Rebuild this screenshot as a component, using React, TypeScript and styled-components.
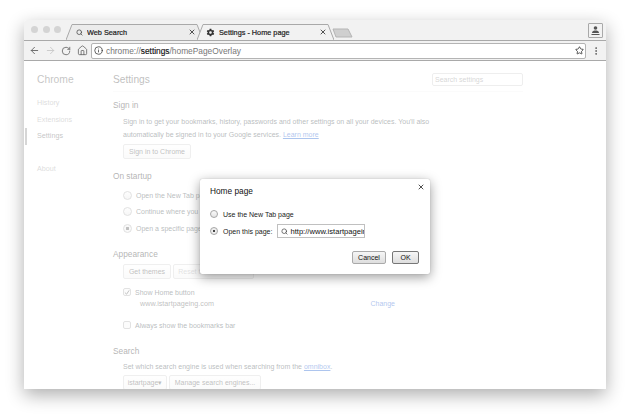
import React from 'react';
import styled, { createGlobalStyle } from 'styled-components';
import { ArrowLeft, ArrowRight, RotateCw, Home, Info, Star, X, Search, MoreVertical } from 'lucide-react';
import { IoMdSettings } from 'react-icons/io';

const GlobalStyle = createGlobalStyle`
  html, body {
    margin: 0;
    padding: 0;
    width: 630px;
    height: 418px;
    overflow: hidden;
    background: #fff;
    font-family: "Liberation Sans", Arial, sans-serif;
  }
`;

const Window = styled.div`
  position: relative;
  width: 582px;
  height: 369px;
  margin: 20px 24px 0;
  display: flex;
  flex-direction: column;
  background: #fff;
  border-radius: 3px 3px 0 0;
  box-shadow: 0 6px 18px rgba(0, 0, 0, 0.32);
`;

const TabStrip = styled.div`
  height: 21px;
  flex: none;
  display: flex;
  align-items: flex-end;
  background: #f2f2f2;
  border-bottom: 1px solid #a9a9a9;
  border-radius: 3px 3px 0 0;
  box-sizing: border-box;
  position: relative;
`;

const Lights = styled.div`
  display: flex;
  gap: 4.5px;
  align-self: flex-start;
  margin: 6px 0 0 7px;
  width: 35px;
`;

const Light = styled.span`
  width: 7px;
  height: 7px;
  border-radius: 50%;
  background: #d4d4d4;
`;

const Tab = styled.div<{ $active?: boolean }>`
  position: relative;
  width: 137px;
  height: 16px;
  margin-left: ${p => (p.$active ? '-6px' : '0')};
  padding: 0 7.5px 0 ${p => (p.$active ? '9px' : '10px')};
  box-sizing: border-box;
  display: flex;
  align-items: center;
  gap: 4px;
  font-size: 7.3px;
  color: #222;
  -webkit-text-stroke: 0.2px #222;
  z-index: ${p => (p.$active ? 2 : 1)};
`;

const TabShape = styled.svg`
  position: absolute;
  inset: 0;
  width: 100%;
  height: 100%;
  z-index: -1;
`;

const TabLabel = styled.span`
  flex: 1;
  white-space: nowrap;
  overflow: hidden;
`;

const NewTab = styled.svg`
  width: 21px;
  height: 10px;
  margin: 0 0 2px -2px;
`;

const ProfileButton = styled.div`
  position: absolute;
  top: 3px;
  right: 3px;
  width: 15px;
  height: 15px;
  box-sizing: border-box;
  border: 1px solid #a9a9a9;
  border-radius: 1px;
  display: flex;
  align-items: center;
  justify-content: center;
`;

const Toolbar = styled.div`
  height: 20px;
  flex: none;
  box-sizing: border-box;
  display: flex;
  align-items: center;
  gap: 4px;
  padding: 0 4px;
  background: #f2f2f2;
  border-bottom: 1px solid #a9a9a9;
`;

const NavIcon = styled.div<{ $off?: boolean }>`
  width: 12px;
  height: 12px;
  display: flex;
  align-items: center;
  justify-content: center;
  color: ${p => (p.$off ? '#c8c8c8' : '#666')};
`;

const Omnibox = styled.div`
  flex: 1;
  height: 16px;
  margin-left: -1px;
  box-sizing: border-box;
  display: flex;
  align-items: center;
  gap: 3px;
  padding: 0 1.5px 0 2px;
  background: #fff;
  border: 1px solid #b4b4b4;
  border-radius: 2px;
  font-size: 8.35px;
  color: #777;
`;

const Url = styled.span`
  flex: 1;
  white-space: nowrap;
  b {
    font-weight: 400;
    color: #111;
    -webkit-text-stroke: 0.15px #111;
  }
`;

const Page = styled.div`
  flex: 1;
  position: relative;
  display: flex;
  color: #303942;
  font-size: 7px;
  overflow: hidden;
`;

const Sidebar = styled.div`
  width: 89px;
  flex: none;
  padding-top: 12px;
  box-sizing: border-box;
`;

const SideTitle = styled.div`
  font-size: 10.3px;
  line-height: 13px;
  color: #555;
  margin: 0 0 9px 13px;
`;

const SideItem = styled.div<{ $active?: boolean; $gap?: number }>`
  height: 16.5px;
  line-height: 16.5px;
  margin: ${p => p.$gap || 0}px 0 0 1px;
  padding-left: 10px;
  font-size: 7.2px;
  border-left: 2px solid ${p => (p.$active ? '#888' : 'transparent')};
  color: ${p => (p.$active ? '#555' : '#999')};
`;

const Main = styled.div`
  flex: 1;
  padding-top: 12px;
`;

const Header = styled.div`
  width: 410px;
  height: 18px;
  display: flex;
  justify-content: space-between;
  align-items: flex-start;
  border-bottom: 1px solid #f2f2f2;
`;

const PageTitle = styled.div`
  font-size: 10.2px;
  line-height: 13px;
  color: #444;
`;

const SearchBox = styled.div`
  width: 91px;
  height: 13px;
  box-sizing: border-box;
  border: 1px solid #ccc;
  border-radius: 2px;
  padding-left: 2px;
  font-size: 7px;
  line-height: 11px;
  color: #888;
`;

const SectionTitle = styled.div<{ $top: number }>`
  font-size: 8.3px;
  line-height: 12px;
  color: #222;
  margin-top: ${p => p.$top}px;
`;

const Indented = styled.div`
  margin-left: 10px;
`;

const Para = styled.div<{ $top?: number }>`
  line-height: 13px;
  margin-top: ${p => p.$top || 0}px;
  white-space: nowrap;
  a {
    color: #15c;
    text-decoration: underline;
  }
`;

const ButtonRow = styled.div<{ $top?: number }>`
  display: flex;
  gap: 2px;
  margin-top: ${p => p.$top || 0}px;
`;

const PageButton = styled.div<{ $w: number; $off?: boolean }>`
  width: ${p => p.$w}px;
  height: 15px;
  box-sizing: border-box;
  border: 1px solid #cfcfcf;
  border-radius: 2px;
  background: linear-gradient(#fdfdfd, #f2f2f2);
  text-align: center;
  line-height: 13px;
  color: ${p => (p.$off ? '#aaa' : '#444')};
  white-space: nowrap;
  overflow: hidden;
`;

const OptionRow = styled.div<{ $top?: number }>`
  display: flex;
  align-items: center;
  gap: 4px;
  height: 12px;
  margin-top: ${p => p.$top || 0}px;
  white-space: nowrap;
`;

const Radio = styled.span<{ $on?: boolean; $size?: number }>`
  width: ${p => p.$size || 9}px;
  height: ${p => p.$size || 9}px;
  flex: none;
  box-sizing: border-box;
  border-radius: 50%;
  border: 1px solid #a6a6a6;
  background: ${p =>
    p.$on ? 'radial-gradient(circle, #444 0 28%, #eee 36%)' : 'linear-gradient(#fafafa, #e4e4e4)'};
`;

const Check = styled.span`
  width: 8px;
  height: 8px;
  flex: none;
  box-sizing: border-box;
  border: 1px solid #aaa;
  border-radius: 2px;
  background: #f6f6f6;
  display: flex;
  align-items: center;
  justify-content: center;
`;

const HomeRow = styled.div`
  width: 255px;
  margin: 0 0 0 17px;
  display: flex;
  justify-content: space-between;
  line-height: 12px;
  color: #444;
  font-size: 7.2px;
  a {
    color: #15c;
    font-size: 7px;
  }
`;

const Veil = styled.div`
  position: absolute;
  inset: 0;
  background: rgba(255, 255, 255, 0.66);
`;

const Dialog = styled.div`
  position: absolute;
  left: 176px;
  top: 118px;
  width: 230px;
  height: 95px;
  box-sizing: border-box;
  padding: 6px 11px 0 10px;
  background: #fff;
  border-radius: 2px;
  box-shadow: 0 3px 12px rgba(0, 0, 0, 0.4), 0 0 1px rgba(0, 0, 0, 0.3);
  font-size: 7px;
  color: #222;
`;

const DialogTitle = styled.div`
  font-size: 8.3px;
  line-height: 12px;
  color: #111;
`;

const CloseIcon = styled.div`
  position: absolute;
  top: 4px;
  right: 5px;
  color: #333;
  display: flex;
`;

const DialogRow = styled.div<{ $top: number }>`
  display: flex;
  align-items: center;
  gap: 5px;
  margin-top: ${p => p.$top}px;
  height: 14px;
  white-space: nowrap;
`;

const UrlField = styled.div`
  width: 88px;
  height: 14px;
  box-sizing: border-box;
  border: 1px solid #c0c0c0;
  display: flex;
  align-items: center;
  gap: 2px;
  padding-left: 3px;
  overflow: hidden;
  font-size: 7.6px;
  color: #111;
  svg {
    flex: none;
  }
`;

const DialogActions = styled.div`
  display: flex;
  justify-content: flex-end;
  gap: 6px;
  margin-top: 13px;
`;

const DialogButton = styled.div<{ $w: number; $main?: boolean }>`
  width: ${p => p.$w}px;
  height: 13px;
  box-sizing: border-box;
  border: 1px solid ${p => (p.$main ? '#777' : '#aaa')};
  border-radius: 2px;
  background: linear-gradient(#f6f6f6, #dedede);
  text-align: center;
  line-height: 11px;
  font-size: 7px;
  color: #111;
`;

export default function App() {
  return (
    <>
      <GlobalStyle />
      <Window>
        <TabStrip>
          <Lights>
            <Light />
            <Light />
            <Light />
          </Lights>
          <Tab>
            <TabShape viewBox="0 0 137 16" preserveAspectRatio="none">
              <path d="M0 16 L6 0.5 H131 L137 16" fill="#ececec" stroke="#a9a9a9" />
            </TabShape>
            <Search size={7} strokeWidth={2.5} color="#444" />
            <TabLabel>Web Search</TabLabel>
            <X size={8} strokeWidth={2.5} color="#333" />
          </Tab>
          <Tab $active>
            <TabShape viewBox="0 0 137 16" preserveAspectRatio="none">
              <path d="M0 16 L6 0.5 H131 L137 16" fill="#f2f2f2" stroke="#a9a9a9" />
            </TabShape>
            <IoMdSettings size={9} color="#333" />
            <TabLabel>Settings - Home page</TabLabel>
            <X size={8} strokeWidth={2.5} color="#333" />
          </Tab>
          <NewTab viewBox="0 0 21 10">
            <path d="M1 1 H16 L20 9 H4 Z" fill="#cfcfcf" stroke="#b5b5b5" />
          </NewTab>
          <ProfileButton>
            <svg width="11" height="11" viewBox="0 0 11 11">
              <circle cx="5.5" cy="3" r="1.8" fill="#555" />
              <path d="M2 8 C2 6 4 5.6 5.5 5.6 C7 5.6 9 6 9 8 Z" fill="#555" />
              <path d="M1.5 9.5 H9.5" stroke="#555" strokeWidth="1" />
            </svg>
          </ProfileButton>
        </TabStrip>
        <Toolbar>
          <NavIcon><ArrowLeft size={11} strokeWidth={2} /></NavIcon>
          <NavIcon $off><ArrowRight size={11} strokeWidth={2} /></NavIcon>
          <NavIcon><RotateCw size={10} strokeWidth={2} /></NavIcon>
          <NavIcon><Home size={11} strokeWidth={1.8} /></NavIcon>
          <Omnibox>
            <Info size={9} strokeWidth={2} color="#333" />
            <Url>chrome://<b>settings</b>/homePageOverlay</Url>
            <Star size={9} strokeWidth={2} color="#222" />
          </Omnibox>
          <NavIcon><MoreVertical size={10} strokeWidth={2.4} /></NavIcon>
        </Toolbar>
        <Page>
          <Sidebar>
            <SideTitle>Chrome</SideTitle>
            <SideItem>History</SideItem>
            <SideItem>Extensions</SideItem>
            <SideItem $active>Settings</SideItem>
            <SideItem $gap={16}>About</SideItem>
          </Sidebar>
          <Main>
            <Header>
              <PageTitle>Settings</PageTitle>
              <SearchBox>Search settings</SearchBox>
            </Header>
            <SectionTitle $top={7}>Sign in</SectionTitle>
            <Indented>
              <Para $top={4}>
                Sign in to get your bookmarks, history, passwords and other settings on all your devices. You'll also
              </Para>
              <Para>
                automatically be signed in to your Google services. <a>Learn more</a>
              </Para>
              <ButtonRow $top={3}>
                <PageButton $w={68}>Sign in to Chrome</PageButton>
              </ButtonRow>
            </Indented>
            <SectionTitle $top={11}>On startup</SectionTitle>
            <Indented>
              <OptionRow $top={7}><Radio />Open the New Tab page</OptionRow>
              <OptionRow $top={4}><Radio />Continue where you left off</OptionRow>
              <OptionRow $top={5}><Radio $on />Open a specific page or set of pages.</OptionRow>
            </Indented>
            <SectionTitle $top={14}>Appearance</SectionTitle>
            <Indented>
              <ButtonRow $top={4}>
                <PageButton $w={48}>Get themes</PageButton>
                <PageButton $w={81} $off>Reset to default theme</PageButton>
              </ButtonRow>
              <OptionRow $top={7}>
                <Check>
                  <svg width="7" height="7" viewBox="0 0 7 7">
                    <path d="M1 3.5 L3 5.5 L6 1" fill="none" stroke="#444" strokeWidth="1.1" />
                  </svg>
                </Check>
                Show Home button
              </OptionRow>
              <HomeRow>
                <span>www.istartpageing.com</span>
                <a>Change</a>
              </HomeRow>
              <OptionRow $top={9}><Check />Always show the bookmarks bar</OptionRow>
            </Indented>
            <SectionTitle $top={14}>Search</SectionTitle>
            <Indented>
              <Para $top={3}>Set which search engine is used when searching from the <a>omnibox</a>.</Para>
              <ButtonRow $top={2}>
                <PageButton $w={44}>istartpage▾</PageButton>
                <PageButton $w={92}>Manage search engines...</PageButton>
              </ButtonRow>
            </Indented>
          </Main>
          <Veil />
          <Dialog>
            <DialogTitle>Home page</DialogTitle>
            <CloseIcon><X size={8} strokeWidth={2.6} /></CloseIcon>
            <DialogRow $top={10}><Radio $size={8} />Use the New Tab page</DialogRow>
            <DialogRow $top={3}>
              <Radio $on $size={8} />
              Open this page:
              <UrlField>
                <Search size={7} strokeWidth={2.4} color="#444" />
                http://www.istartpageing.com
              </UrlField>
            </DialogRow>
            <DialogActions>
              <DialogButton $w={34}>Cancel</DialogButton>
              <DialogButton $w={27} $main>OK</DialogButton>
            </DialogActions>
          </Dialog>
        </Page>
      </Window>
    </>
  );
}
